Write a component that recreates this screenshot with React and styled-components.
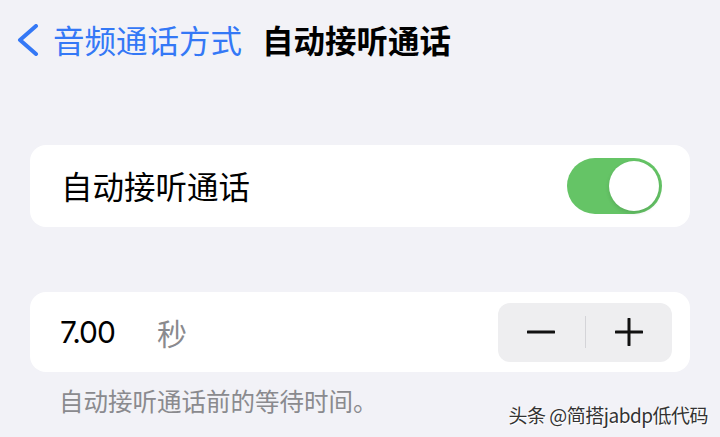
import React from "react";
import styled, { createGlobalStyle } from "styled-components";

const Global = createGlobalStyle`
  html, body { margin: 0; padding: 0; background: #F2F2F7; }
  body { font-family: "Noto Sans CJK SC", "Noto Sans", sans-serif; }
  * { box-sizing: border-box; }
`;

const Page = styled.div`
  position: relative;
  width: 720px;
  height: 437px;
  overflow: hidden;
  background: #F2F2F7;
  display: flex;
  flex-direction: column;
`;

const NavBar = styled.div`
  height: 80px;
  display: flex;
  align-items: center;
  padding-left: 17px;
`;

const BackButton = styled.div`
  display: flex;
  align-items: center;
  color: #3478F6;
  font-size: 31.5px;
  line-height: 1;
  gap: 14px;
`;

const Title = styled.div`
  margin-left: 20px;
  font-size: 31.5px;
  font-weight: 700;
  color: #000;
  line-height: 1;
`;

const Card = styled.div`
  margin: ${(p) => p.$top}px 30px 0 30px;
  height: ${(p) => p.$h}px;
  background: #fff;
  border-radius: 16px;
  display: flex;
  align-items: center;
  justify-content: space-between;
  padding: 0 ${(p) => p.$pr}px 0 ${(p) => p.$pl}px;
`;

const Label = styled.div`
  font-size: 31.5px;
  color: #000;
  line-height: 1;
`;

const Toggle = styled.div`
  width: 95px;
  height: 56px;
  border-radius: 28px;
  background: #65C466;
  padding: 3px;
  display: flex;
  justify-content: flex-end;
`;

const Knob = styled.div`
  width: 50px;
  height: 50px;
  border-radius: 50%;
  background: #fff;
  box-shadow: 0 2px 4px rgba(0, 0, 0, 0.12);
`;

const ValueGroup = styled.div`
  display: flex;
  align-items: center;
  gap: 42px;
`;

const Value = styled.span`
  font-family: "Inter", "Noto Sans", sans-serif;
  font-size: 30px;
  letter-spacing: -1px;
  color: #000;
  line-height: 1;
`;

const Unit = styled.span`
  font-size: 30px;
  color: #8A8A8E;
  line-height: 1;
`;

const Stepper = styled.div`
  width: 174px;
  height: 59px;
  border-radius: 12px;
  background: #EEEEF0;
  display: flex;
  align-items: center;
`;

const StepButton = styled.div`
  flex: 1;
  height: 100%;
  display: flex;
  align-items: center;
  justify-content: center;
`;

const Divider = styled.div`
  width: 1px;
  height: 32px;
  background: #D4D4D8;
`;

const Footer = styled.div`
  margin-top: 14px;
  padding-left: 59px;
  font-size: 24.5px;
  line-height: 30px;
  color: #8A8A8E;
`;

const Watermark = styled.div`
  position: absolute;
  right: 12px;
  top: 402px;
  font-size: 19px;
  line-height: 26px;
  color: #333;
  letter-spacing: -0.5px;
  text-shadow: 0 0 2px #fff, 1px 1px 1px #fff;
`;

const Chevron = () => (
  <svg width="22" height="32" viewBox="0 0 22 32">
    <polyline
      points="19,2 3,16 19,30"
      fill="none"
      stroke="#3478F6"
      strokeWidth="4"
      strokeLinecap="round"
      strokeLinejoin="round"
    />
  </svg>
);

const Minus = () => (
  <svg width="28" height="28" viewBox="0 0 28 28">
    <line x1="1" y1="14" x2="27" y2="14" stroke="#111" strokeWidth="3" strokeLinecap="round" />
  </svg>
);

const Plus = () => (
  <svg width="28" height="28" viewBox="0 0 28 28">
    <line x1="1" y1="14" x2="27" y2="14" stroke="#111" strokeWidth="3" strokeLinecap="round" />
    <line x1="14" y1="1" x2="14" y2="27" stroke="#111" strokeWidth="3" strokeLinecap="round" />
  </svg>
);

export default function App() {
  return (
    <Page>
      <Global />
      <NavBar>
        <BackButton>
          <Chevron />
          <span>音频通话方式</span>
        </BackButton>
        <Title>自动接听通话</Title>
      </NavBar>

      <Card $top={65} $h={82} $pl={31} $pr={28}>
        <Label>自动接听通话</Label>
        <Toggle>
          <Knob />
        </Toggle>
      </Card>

      <Card $top={65} $h={80} $pl={30} $pr={18}>
        <ValueGroup>
          <Value>7.00</Value>
          <Unit>秒</Unit>
        </ValueGroup>
        <Stepper>
          <StepButton>
            <Minus />
          </StepButton>
          <Divider />
          <StepButton>
            <Plus />
          </StepButton>
        </Stepper>
      </Card>

      <Footer>自动接听通话前的等待时间。</Footer>

      <Watermark>头条 @简搭jabdp低代码</Watermark>
    </Page>
  );
}
